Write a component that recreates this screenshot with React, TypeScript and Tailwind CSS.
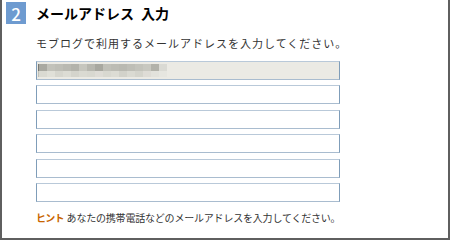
import React from 'react';

const blurTop = ['#a9a9a1', '#c2c2ba', '#bebeb6', '#b9b9b1', '#b3b3ab', '#c6c6be', '#b7b7af', '#a8a8a0', '#c0c0b8', '#bcbcb4', '#b9b9b1', '#bebeb6', '#c3c3bb', '#c8c8c0', '#b2b2aa', '#dadad4'];
const blurBottom = ['#dadad2', '#e0e0d8', '#d6d6ce', '#dcdcd4', '#d4d4cc', '#dadad2', '#d8d8d0', '#dedcd6', '#d8d8d0', '#dcdcd4', '#d2d2ca', '#dadad2', '#d4d4cc', '#dedcd6', '#e2e2dc', '#e6e6e0'];

function Field({ filled }: { filled?: boolean }) {
    return (
        <div
            className={`w-[304px] h-[19px] border border-[#7f9db9] border-t-[#b9c9d9] border-b-[#a9bccf] ${filled ? 'bg-[#ebeae4]' : 'bg-white'} flex items-center pl-[1px]`}
        >
            {filled && (
                <div className="flex flex-col">
                    {/* blurred address */}
                    <div className="flex">
                        <div className="w-[1px] h-[7px] bg-[#7a7a74]" />
                        {blurTop.map((c, i) => (
                            <div key={i} className="w-[8px] h-[7px]" style={{ backgroundColor: c }} />
                        ))}
                    </div>
                    <div className="flex">
                        <div className="w-[1px] h-[6px] bg-[#c0c0b8]" />
                        {blurBottom.map((c, i) => (
                            <div key={i} className="w-[8px] h-[6px]" style={{ backgroundColor: c }} />
                        ))}
                    </div>
                </div>
            )}
        </div>
    );
}

export default function App() {
    return (
        <div className="w-[450px] h-[240px] bg-white border-x-2 border-b-2 border-[#5f5f5f] font-['Noto_Sans_CJK_JP','Noto_Sans',sans-serif] text-[#333]">

            {/* Heading */}
            <div className="flex items-center pt-[2px] pl-[4px] gap-[10px]">
                <div className="w-[20px] h-[22px] bg-[#6e9bd0] text-white text-[17px] font-medium leading-none flex items-center justify-center">
                    2
                </div>
                <h1 className="text-[14px] font-bold text-black leading-none">
                    メールアドレス<span className="ml-[7px]">入力</span>
                </h1>
            </div>

            <div className="pl-[34px]">
                <p className="text-[11px] leading-none mt-[14px] tracking-[1px]">
                    モブログで利用するメールアドレスを入力してください。
                </p>

                {/* Inputs */}
                <div className="flex flex-col gap-[5.4px] mt-[12px]">
                    <Field filled />
                    <Field />
                    <Field />
                    <Field />
                    <Field />
                    <Field />
                </div>

                {/* Hint */}
                <p className="text-[10px] leading-none mt-[11px] flex items-center tracking-[-0.2px]">
                    <span className="text-[#c86400] font-bold mr-[3px] tracking-[-0.8px]">ヒント</span>
                    あなたの携帯電話などのメールアドレスを入力してください。
                </p>
            </div>
        </div>
    );
}
